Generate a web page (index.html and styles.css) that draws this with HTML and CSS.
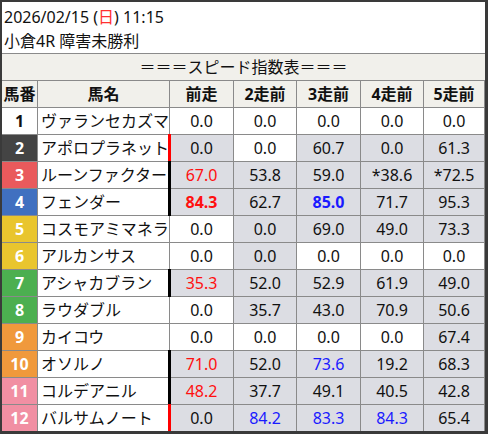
FILE: index.html
```html
<!DOCTYPE html>
<html lang="ja">
<head>
<meta charset="utf-8">
<title>スピード指数表</title>
<link rel="stylesheet" href="styles.css">
</head>
<body>
<div class="frame">
  <div class="info">
    <div class="line">2026/02/15 (<span class="sun">日</span>) 11:15</div>
    <div class="line">小倉4R 障害未勝利</div>
  </div>
  <div class="title">＝＝＝スピード指数表＝＝＝</div>
  <div class="row head">
    <div class="c num">馬番</div>
    <div class="c name">馬名</div>
    <div class="c">前走</div>
    <div class="c">2走前</div>
    <div class="c">3走前</div>
    <div class="c">4走前</div>
    <div class="c">5走前</div>
  </div>

  <div class="row">
    <div class="c num w1">1</div>
    <div class="c name">ヴァランセカズマ</div>
    <div class="c v">0.0</div>
    <div class="c v">0.0</div>
    <div class="c v">0.0</div>
    <div class="c v">0.0</div>
    <div class="c v">0.0</div>
  </div>
  <div class="row">
    <div class="c num w2">2</div>
    <div class="c name">アポロプラネット</div>
    <div class="c v g mk red-mk">0.0</div>
    <div class="c v">0.0</div>
    <div class="c v g">60.7</div>
    <div class="c v g">0.0</div>
    <div class="c v g">61.3</div>
  </div>
  <div class="row">
    <div class="c num w3">3</div>
    <div class="c name">ルーンファクター</div>
    <div class="c v g mk blk-mk t-red">67.0</div>
    <div class="c v g">53.8</div>
    <div class="c v g">59.0</div>
    <div class="c v g">*38.6</div>
    <div class="c v g">*72.5</div>
  </div>
  <div class="row">
    <div class="c num w4">4</div>
    <div class="c name">フェンダー</div>
    <div class="c v g mk blk-mk t-red b">84.3</div>
    <div class="c v g">62.7</div>
    <div class="c v g t-blue b">85.0</div>
    <div class="c v g">71.7</div>
    <div class="c v g">95.3</div>
  </div>
  <div class="row">
    <div class="c num w5">5</div>
    <div class="c name">コスモアミマネラ</div>
    <div class="c v">0.0</div>
    <div class="c v g">0.0</div>
    <div class="c v g">69.0</div>
    <div class="c v g">49.0</div>
    <div class="c v g">73.3</div>
  </div>
  <div class="row">
    <div class="c num w5">6</div>
    <div class="c name">アルカンサス</div>
    <div class="c v">0.0</div>
    <div class="c v g">0.0</div>
    <div class="c v">0.0</div>
    <div class="c v">0.0</div>
    <div class="c v">0.0</div>
  </div>
  <div class="row">
    <div class="c num w7">7</div>
    <div class="c name">アシャカブラン</div>
    <div class="c v g mk blk-mk t-red">35.3</div>
    <div class="c v g">52.0</div>
    <div class="c v g">52.9</div>
    <div class="c v g">61.9</div>
    <div class="c v g">49.0</div>
  </div>
  <div class="row">
    <div class="c num w7">8</div>
    <div class="c name">ラウダブル</div>
    <div class="c v">0.0</div>
    <div class="c v g">35.7</div>
    <div class="c v g">43.0</div>
    <div class="c v g">70.9</div>
    <div class="c v g">50.6</div>
  </div>
  <div class="row">
    <div class="c num w9">9</div>
    <div class="c name">カイコウ</div>
    <div class="c v">0.0</div>
    <div class="c v">0.0</div>
    <div class="c v">0.0</div>
    <div class="c v">0.0</div>
    <div class="c v g">67.4</div>
  </div>
  <div class="row">
    <div class="c num w9">10</div>
    <div class="c name">オソルノ</div>
    <div class="c v g mk blk-mk t-red">71.0</div>
    <div class="c v g">52.0</div>
    <div class="c v g t-blue">73.6</div>
    <div class="c v g">19.2</div>
    <div class="c v g">68.3</div>
  </div>
  <div class="row">
    <div class="c num w11">11</div>
    <div class="c name">コルデアニル</div>
    <div class="c v g mk blk-mk t-red">48.2</div>
    <div class="c v g">37.7</div>
    <div class="c v g">49.1</div>
    <div class="c v g">40.5</div>
    <div class="c v g">42.8</div>
  </div>
  <div class="row last">
    <div class="c num w11">12</div>
    <div class="c name">バルサムノート</div>
    <div class="c v g mk red-mk">0.0</div>
    <div class="c v g t-blue">84.2</div>
    <div class="c v g t-blue">83.3</div>
    <div class="c v g t-blue">84.3</div>
    <div class="c v g">65.4</div>
  </div>
</div>
</body>
</html>
```

FILE: styles.css
```css
* { box-sizing: border-box; }
html, body { margin: 0; padding: 0; background: #ffffff; }
body {
  font-family: "Noto Sans", "Noto Sans CJK JP", sans-serif;
  font-size: 16px;
  color: #111;
}
.frame {
  width: 488px;
  height: 434px;
  border-style: solid;
  border-color: #3a3a3a;
  border-width: 2px 3px 3px 2px;
  background: #fff;
  overflow: hidden;
}
.info {
  height: 52px;
  padding: 3px 0 0 2px;
  border-bottom: 1px solid #8a8a8a;
}
.line {
  height: 24px;
  line-height: 24px;
  white-space: nowrap;
}
.sun { color: #ff3030; }
.title {
  height: 27px;
  line-height: 26px;
  text-align: center;
  background: #f1f0eb;
  border-bottom: 1px solid #8a8a8a;
}
.row {
  display: grid;
  grid-template-columns: 36px 132px 64px 63px 64px 63px 61px;
  height: 27px;
  border-bottom: 1px solid #8a8a8a;
}
.row.last { height: 26px; border-bottom: 0; }
.c {
  position: relative;
  border-right: 1px solid #8a8a8a;
  text-align: center;
  line-height: 26px;
  white-space: nowrap;
  overflow: visible;
}
.head { background: #f1f0eb; }
.head .c { font-weight: bold; }
.c.name { text-align: left; padding-left: 3px; }
.head .c.name { text-align: center; padding-left: 0; }
.num { font-weight: bold; color: #fff; }
.head .num { color: #111; }
.w1 { color: #111; background: #fff; }
.w2 { background: #444444; }
.w3 { background: #e95a5c; }
.w4 { background: #4070c0; }
.w5 { background: #e9c52e; }
.w7 { background: #4caf50; }
.w9 { background: #f0993c; }
.w11 { background: #f18fa3; }
.v.g { background: #dcdde3; }
.t-red { color: #ff1010; }
.t-blue { color: #1a1aff; }
.b { font-weight: bold; }
.mk::before {
  content: "";
  position: absolute;
  left: -2px;
  top: -1px;
  bottom: -1px;
  width: 3px;
}
.red-mk::before { background: #ff0000; }
.blk-mk::before { background: #000; }
```
